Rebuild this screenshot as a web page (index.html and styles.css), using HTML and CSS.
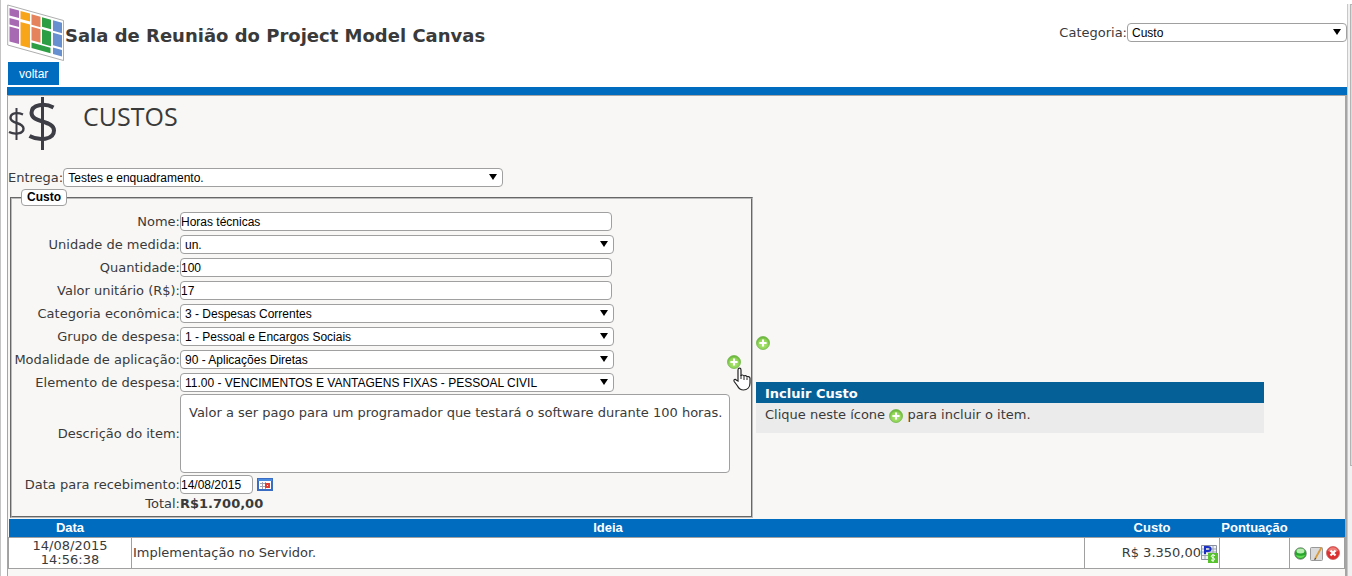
FILE: index.html
```
<!DOCTYPE html>
<html lang="pt-BR">
  <head>
    <meta charset="UTF-8" />
    <meta name="viewport" content="width=device-width, initial-scale=1.0" />
    <title>Sala de Reunião do Project Model Canvas</title>
    <link rel="stylesheet" href="styles.css">
  </head>
  <body>
    <!-- shared icon -->
    <svg class="hidden">
      <defs>
        <radialGradient id="green" cx="50%" cy="60%" r="55%">
          <stop offset="0" stop-color="#b5ea7c" />
          <stop offset="0.7" stop-color="#8fd455" />
          <stop offset="1" stop-color="#68b53a" />
        </radialGradient>
      </defs>
      <symbol id="plus" viewBox="0 0 14 14">
        <circle cx="7" cy="7" r="6.5" fill="url(#green)" stroke="#72b84a" stroke-width="0.8" />
        <path d="M7 3.4v7.2M3.4 7h7.2" stroke="#fff" stroke-width="2" />
      </symbol>
    </svg>

    <div class="page">
      <header>
        <div class="top">
          <svg class="logo" viewBox="0 0 58 58">
            <path d="M.7 1L56.5 16.500V56.500L.7 41z" fill="#fff" stroke="#999" stroke-width="0.8" />
            <path d="M2.500 4l9.500 2.600v7.400L2.500 11.400zM2.500 14l9.500 2.600v6.400L2.500 20.400zM2.500 22.500l9.500 2.600v15L2.500 37.500z" fill="#a869b3" />
            <path d="M13.500 7l9.500 2.600v7.900L13.500 15zM13.500 18l9.500 2.600v23.400L13.500 41.500z" fill="#f9a51a" />
            <path d="M24.500 10.200l9 2.500v10.500L24.500 20.700zM24.500 22.700l9 2.500v13.500L24.500 36.200z" fill="#e5835c" />
            <path d="M35 13.200l9 2.500v9.500L35 22.700zM35 25.200l9 2.500v14.500L35 39.700zM24.500 38.500l19 5.200v5.500L24.500 44z" fill="#2e9e44" />
            <path d="M46 16.300l9 2.500v10.500L46 26.800zM46 28.800l9 2.500v12.500L46 41.300zM46 43.500l9 2.500v6.500L46 50z" fill="#6690cf" />
          </svg>
          <h1>Sala de Reunião do Project Model Canvas</h1>
          <div class="category">
            <label for="categoria">Categoria:</label>
            <span class="select">
              <select id="categoria"><option>Custo</option></select>
            </span>
          </div>
        </div>
        <button class="back">voltar</button>
      </header>

      <main>
        <div class="section-title">
          <svg class="money" viewBox="0 0 50 54" fill="none" stroke="#3d3d45">
            <path d="M15 18.500C9 16 2.500 17 2.500 22c0 6 13 4 13 10.500C15.500 38.500 6 38.500 1 36" stroke-width="2.400" />
            <path d="M8.500 12v32" stroke-width="2" />
            <path d="M45.500 11.500C37 7 23.500 8 23.500 17c0 10 22.500 7 22.500 17.500C46 44 31 45 21.500 40" stroke-width="4" />
            <path d="M34.500 1v53" stroke-width="3" />
          </svg>
          <h2>CUSTOS</h2>
        </div>

        <div class="delivery">
          <label for="entrega">Entrega:</label>
          <span class="select">
            <select id="entrega"><option>Testes e enquadramento.</option></select>
          </span>
        </div>

        <div class="content">
          <fieldset>
            <legend>Custo</legend>
            <div class="cost">
              <div class="fields">
                <label for="nome">Nome:</label>
                <input type="text" id="nome" value="Horas técnicas" />

                <label for="unidade">Unidade de medida:</label>
                <span class="select">
                  <select id="unidade"><option>un.</option></select>
                </span>

                <label for="quantidade">Quantidade:</label>
                <input type="text" id="quantidade" value="100" />

                <label for="valor">Valor unitário (R$):</label>
                <input type="text" id="valor" value="17" />

                <label for="economica">Categoria econômica:</label>
                <span class="select">
                  <select id="economica"><option>3 - Despesas Correntes</option></select>
                </span>

                <label for="grupo">Grupo de despesa:</label>
                <span class="select">
                  <select id="grupo"><option>1 - Pessoal e Encargos Sociais</option></select>
                </span>

                <label for="modalidade">Modalidade de aplicação:</label>
                <span class="select">
                  <select id="modalidade"><option>90 - Aplicações Diretas</option></select>
                </span>

                <label for="elemento">Elemento de despesa:</label>
                <span class="select">
                  <select id="elemento"><option>11.00 - VENCIMENTOS E VANTAGENS FIXAS - PESSOAL CIVIL</option></select>
                </span>

                <label for="descricao">Descrição do item:</label>
                <textarea id="descricao">Valor a ser pago para um programador que testará o software durante 100 horas.</textarea>

                <label for="data">Data para recebimento:</label>
                <div class="date">
                  <input type="text" id="data" value="14/08/2015" />
                  <button class="icon-btn" aria-label="Calendário">
                    <svg width="16" height="13" viewBox="0 0 16 13">
                      <rect x="1" y="1" width="14" height="11" fill="#fff" stroke="#3a6cc4" stroke-width="2" />
                      <path d="M1 2h14" stroke="#4b8be0" stroke-width="2" />
                      <path d="M3 5.500h9M3 8.500h9M5.500 4v7M8.500 4v7" stroke="#a3a3b3" />
                      <path d="M8 5h5v5H8z" fill="#e33c34" />
                      <path d="M10 7h1v1h-1z" fill="#fff" />
                    </svg>
                  </button>
                </div>

                <span class="total">Total:</span>
                <strong class="total">R$1.700,00</strong>
              </div>
              <button class="icon-btn add" aria-label="Incluir">
                <svg width="14" height="14"><use href="#plus" /></svg>
                <svg class="pointer" width="18" height="24" viewBox="0 0 18 24">
                  <path d="M5 14V3c0-2.400 3-2.400 3 0v6c0-1.500 3-1.300 3 .5 0-1.500 3-1.200 3 .8 0-1.300 3-1 3 1V16c0 4.500-3 7-6.500 7-3 0-4.500-1-6-4L1.200 14.500c-1-2 1-2.800 2.300-1.300z" fill="#fff" stroke="#222" stroke-width="1.200" />
                  <path d="M8 8v4M11 9.500V13M14 10.500V13" stroke="#222" fill="none" />
                </svg>
              </button>
            </div>
          </fieldset>

          <aside>
            <button class="icon-btn" aria-label="Incluir custo">
              <svg width="14" height="14"><use href="#plus" /></svg>
            </button>
            <div class="help">
              <h3>Incluir Custo</h3>
              <p>Clique neste ícone <svg width="14" height="14"><use href="#plus" /></svg> para incluir o item.</p>
            </div>
          </aside>
        </div>

        <table>
          <thead>
            <tr>
              <th class="col-date">Data</th>
              <th>Ideia</th>
              <th class="col-cost">Custo</th>
              <th class="col-score">Pontuação</th>
              <th class="col-actions"></th>
            </tr>
          </thead>
          <tbody>
            <tr>
              <td class="when">14/08/2015<br />14:56:38</td>
              <td>Implementação no Servidor.</td>
              <td>
                <div class="price">
                  R$ 3.350,00
                  <button class="icon-btn" aria-label="Planilha de custo">
                    <svg width="17" height="19" viewBox="0 0 17 19">
                      <path d="M.500 1.500h15v14H.500z" fill="#eef1f6" stroke="#8a90a0" />
                      <path d="M1 5h14M1 8h14M1 11.500h14M4 2v13M12 2v13" stroke="#9aa2b0" />
                      <path d="M4 10V3h3c3.500 0 3.500 4 0 4H4" fill="none" stroke="#1b2fc4" stroke-width="2" />
                      <path d="M7 9h10v10H7z" fill="#58c22e" />
                      <path d="M14 11.500c-4-1.500-5 1.500-2 2.300s1.500 3.500-2 2.200M12 10v8" fill="none" stroke="#fff" />
                    </svg>
                  </button>
                </div>
              </td>
              <td></td>
              <td>
                <div class="actions">
                  <button class="icon-btn" aria-label="Situação">
                    <svg width="13" height="13" viewBox="0 0 13 13">
                      <circle cx="6.500" cy="6.500" r="5.800" fill="#27a52c" stroke="#777" stroke-width="0.800" />
                      <ellipse cx="6.500" cy="4" rx="4" ry="2.500" fill="#b9edb2" />
                      <path d="M2 8c2 1 7 1 9 0-1 4-8 4-9 0z" fill="#63db55" />
                    </svg>
                  </button>
                  <button class="icon-btn" aria-label="Editar">
                    <svg width="13" height="15" viewBox="0 0 13 15">
                      <rect x="0.500" y="1.500" width="12" height="13" rx="1" fill="#dadada" stroke="#999" />
                      <path d="M11.500 1.500L5 13" stroke="#d89b3c" stroke-width="1.800" />
                      <path d="M5.500 12l-.8 2" stroke="#444" />
                    </svg>
                  </button>
                  <button class="icon-btn" aria-label="Excluir">
                    <svg width="14" height="14" viewBox="0 0 14 14">
                      <circle cx="7" cy="7" r="6.500" fill="#dc2f2f" stroke="#c96060" stroke-width="0.800" />
                      <path d="M2 5c1-5 9-5 10 0-3 1.500-7 1.500-10 0z" fill="#ee7d78" />
                      <path d="M4.500 4.500l5 5M9.500 4.500l-5 5" stroke="#fff" stroke-width="2.200" />
                    </svg>
                  </button>
                </div>
              </td>
            </tr>
          </tbody>
        </table>
      </main>
    </div>
    <div class="scrollbar"><div class="thumb"></div></div>
  </body>
</html>
```
FILE: styles.css
```
* {
  box-sizing: border-box;
}
body {
  margin: 0;
  display: flex;
  min-height: 100vh;
  border-left: 1px solid #c4c4c4;
  font-family: "DejaVu Sans", Verdana, sans-serif;
  font-size: 13px;
  line-height: 16px;
  color: #3a3a3a;
  background-color: #fff;
}
svg {
  display: block;
}
.hidden {
  position: absolute;
  width: 0;
  height: 0;
}
.page {
  flex: 1;
  display: flex;
  flex-direction: column;
  padding-left: 6px;
}
.scrollbar {
  width: 5px;
  margin-top: 4px;
  padding-left: 2px;
  border-left: 1px solid #c8c8c8;
  background-color: #f1f1f1;
}
.thumb {
  height: 462px;
  border: 1px solid #b4b4b4;
  border-right: none;
  background-color: #dcdcdc;
}

/* header */
header {
  padding-top: 4px;
  border-bottom: 8px solid #006cc0;
}
.top {
  display: flex;
  height: 58px;
}
.logo {
  width: 58px;
  height: 58px;
}
h1 {
  flex: 1;
  margin: 20px 0 0;
  font-size: 18px;
  line-height: 24px;
}
.category {
  display: flex;
  align-items: center;
  height: 19px;
  margin-top: 19px;
}
.category .select {
  width: 220px;
}
.back {
  display: block;
  height: 23px;
  margin: 0 0 2px 1px;
  padding: 0 11px;
  border: none;
  background-color: #006cc0;
  color: #fff;
  font-family: "Liberation Sans", Arial, sans-serif;
  font-size: 12px;
  cursor: pointer;
}

/* form controls */
input,
select {
  height: 19px;
  margin: 0;
  border: 1px solid #a0a0a0;
  border-radius: 4px;
  background-color: #fff;
  color: #000;
  font-family: "Liberation Sans", Arial, sans-serif;
  font-size: 12px;
}
input {
  width: 432px;
  padding: 0;
}
select {
  display: block;
  width: 100%;
  padding: 0 4px;
  appearance: none;
}
.select {
  position: relative;
  width: 434px;
}
.select::after {
  content: "";
  position: absolute;
  top: 6px;
  right: 6px;
  border: 4px solid transparent;
  border-top: 6px solid #000;
  border-bottom: none;
  pointer-events: none;
}
textarea {
  width: 550px;
  height: 79px;
  padding: 10px 0 10px 8px;
  border: 1px solid #a0a0a0;
  border-radius: 4px;
  background-color: #fff;
  color: #3a3a3a;
  font: inherit;
  resize: none;
}
.icon-btn {
  padding: 0;
  border: none;
  background: none;
  cursor: pointer;
}

/* main panel */
main {
  flex: 1;
  border: 1px solid #a5a5a5;
  border-right-width: 2px;
  border-bottom: none;
  background-color: #f8f7f5;
}
.section-title {
  display: flex;
  height: 72px;
}
.money {
  width: 50px;
  height: 54px;
}
h2 {
  margin: 3px 0 0 25px;
  font-family: "Open Sans", sans-serif;
  font-size: 25px;
  line-height: 34px;
  font-weight: 400;
}
.delivery {
  display: flex;
  align-items: center;
}
.delivery .select {
  width: 440px;
}
.content {
  display: flex;
  gap: 3px;
  padding: 2px 0 1px 2px;
}
fieldset {
  width: 743px;
  margin: 0;
  padding: 0 0 4px;
  border: 2px groove #bbb;
}
legend {
  margin-left: 9px;
  padding: 0 5px;
  border: 1px solid #a0a0a0;
  border-radius: 4px;
  background-color: #fff;
  color: #000;
  font: bold 12px/15px "Liberation Sans", Arial, sans-serif;
}
.cost {
  display: flex;
  align-items: center;
  justify-content: space-between;
  padding-top: 6px;
}
.fields {
  display: grid;
  grid-template-columns: 168px 546px;
  align-items: center;
  row-gap: 4px;
}
.fields > label,
.fields > span:not(.select) {
  text-align: right;
  white-space: nowrap;
}
.fields textarea {
  margin: -2px 0;
}
.fields .total {
  margin-top: -2px;
}
.date {
  display: flex;
  align-items: center;
  gap: 4px;
}
.date input {
  width: 73px;
}
.add {
  position: relative;
  margin-right: 10px;
}
.pointer {
  position: absolute;
  top: 12px;
  left: 6px;
}
aside {
  flex: 1;
  padding-top: 147px;
}
.help {
  max-width: 508px;
  margin-top: 28px;
  background-color: #ebebeb;
}
.help h3 {
  margin: 0;
  padding: 4px 9px 1px;
  background-color: #066098;
  color: #fff;
  font-size: 13px;
  line-height: 16px;
}
.help p {
  margin: 0;
  padding: 4px 9px 10px;
}
.help p svg {
  display: inline-block;
  vertical-align: -4px;
}

/* ideas table */
table {
  width: 100%;
  border-collapse: collapse;
  table-layout: fixed;
}
th {
  height: 18px;
  padding: 0;
  background-color: #006cc0;
  color: #fff;
  font: bold 13px/18px "Liberation Sans", Arial, sans-serif;
}
td {
  height: 31px;
  padding: 1px;
  border: 1px solid #a0a0a0;
  background-color: #fff;
}
.when {
  line-height: 14px;
  text-align: center;
}
.col-date {
  width: 123px;
}
.col-cost {
  width: 135px;
}
.col-score {
  width: 70px;
}
.col-actions {
  width: 55px;
}
.price {
  display: flex;
  align-items: center;
  justify-content: flex-end;
}
.actions {
  display: flex;
  align-items: center;
  justify-content: flex-end;
  gap: 3px;
  padding-right: 3px;
}
```
